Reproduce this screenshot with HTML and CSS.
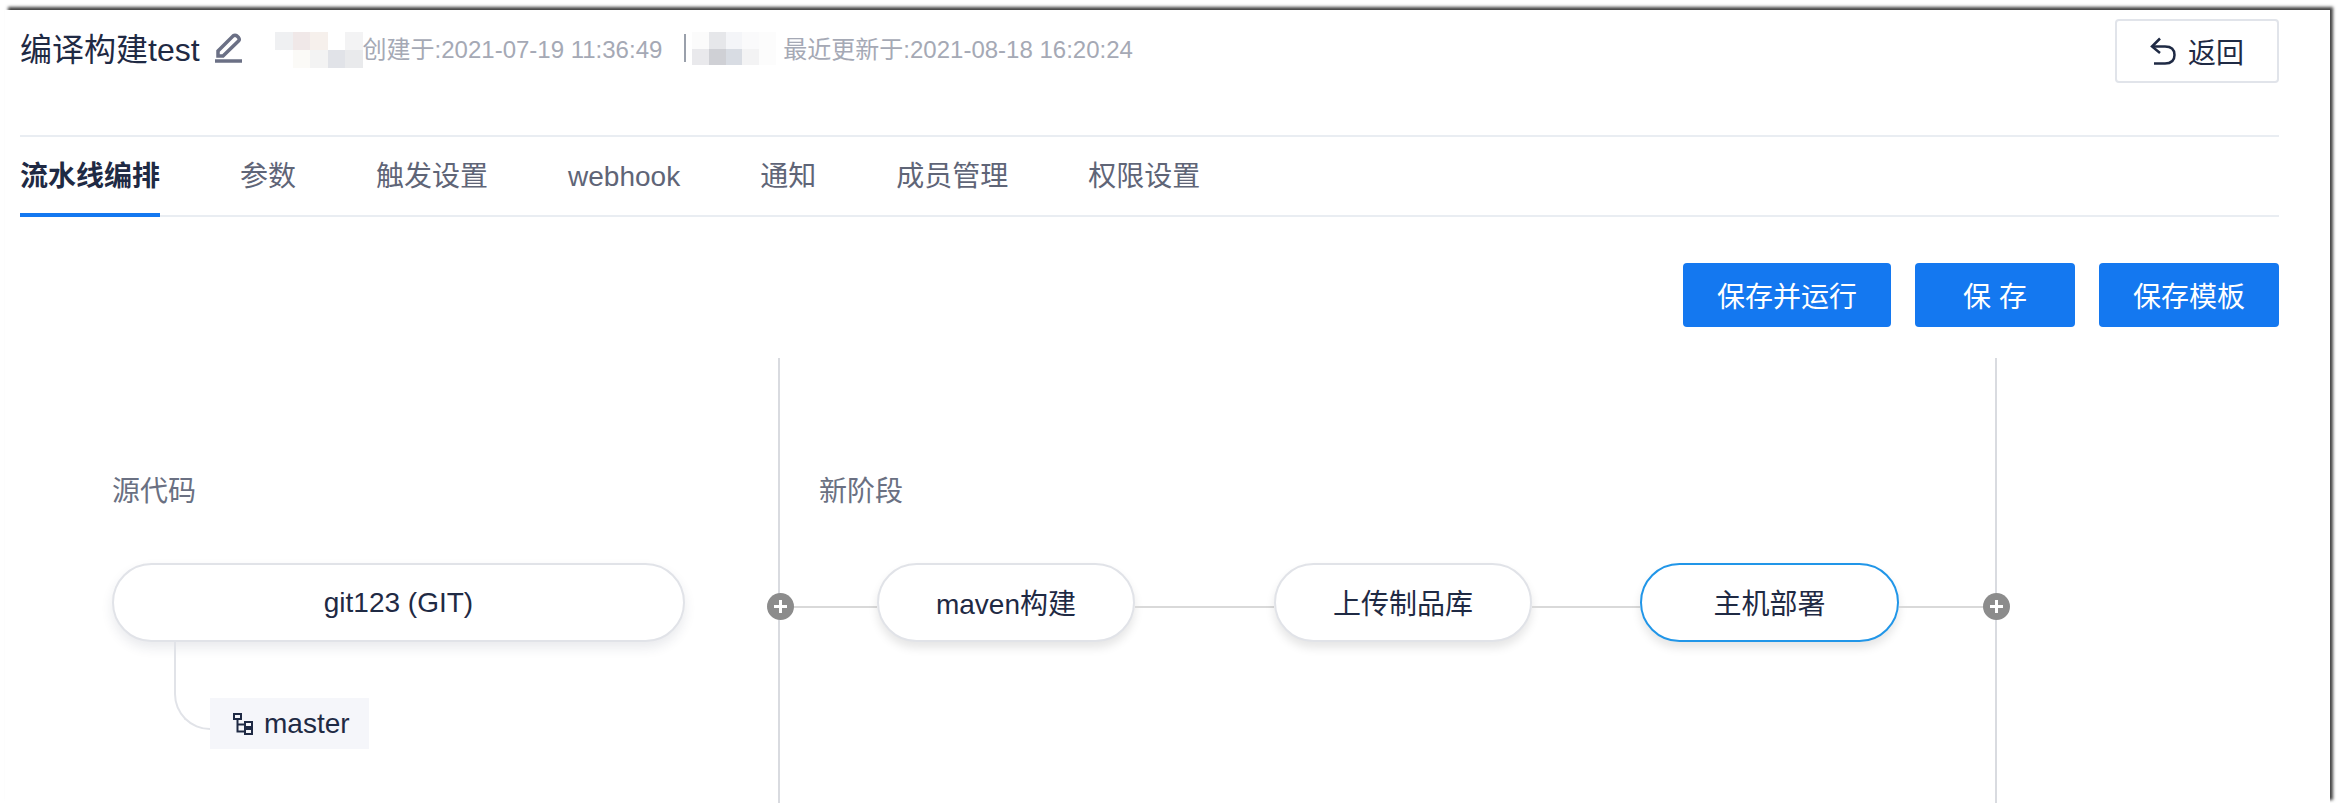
FILE: index.html
```html
<!DOCTYPE html>
<html lang="zh-CN">
<head>
  <meta charset="UTF-8">
  <title>编译构建test</title>
  <link rel="stylesheet" href="styles.css">
</head>
<body>
  <div class="window">
    <header class="topbar">
      <div class="title-row">
        <h1 class="title">编译构建test</h1>
        <svg class="edit-icon" width="28" height="30" viewBox="0 0 28 30" fill="none" stroke="#6b7085" stroke-width="3.500">
          <path d="M3 22 L3 18 L18 3 Q20 1.500 22 3 L23.500 4.500 Q25 6.500 23.500 8 L8 23 L3 23 Z"/>
          <path d="M0 28 H27"/>
        </svg>
        <svg class="mosaic mosaic-first" width="88" height="36" viewBox="0 0 5 2" shape-rendering="crispEdges">
          <rect x="0" y="0" width="1" height="1" fill="#eff0f2"/>
          <rect x="1" y="0" width="1" height="1" fill="#f0e8e8"/>
          <rect x="2" y="0" width="1" height="1" fill="#f6f0ec"/>
          <rect x="4" y="0" width="1" height="1" fill="#f3f3f4"/>
          <rect x="1" y="1" width="1" height="1" fill="#fbfaf7"/>
          <rect x="2" y="1" width="1" height="1" fill="#f3f3f3"/>
          <rect x="3" y="1" width="1" height="1" fill="#e1e3e8"/>
          <rect x="4" y="1" width="1" height="1" fill="#e9eaec"/>
        </svg>
        <span class="meta">创建于:2021-07-19 11:36:49</span>
        <span class="meta-sep"></span>
        <svg class="mosaic mosaic-second" width="84" height="35" viewBox="0 0 5 2" shape-rendering="crispEdges">
          <rect x="0" y="0" width="1" height="1" fill="#fbfbfb"/>
          <rect x="1" y="0" width="1" height="1" fill="#e6e7ea"/>
          <rect x="2" y="0" width="1" height="1" fill="#f4f5f8"/>
          <rect x="3" y="0" width="1" height="1" fill="#fafafb"/>
          <rect x="4" y="0" width="1" height="1" fill="#fcfcfc"/>
          <rect x="0" y="1" width="1" height="1" fill="#e9e9ec"/>
          <rect x="1" y="1" width="1" height="1" fill="#cfd0d5"/>
          <rect x="2" y="1" width="1" height="1" fill="#d8dce3"/>
          <rect x="3" y="1" width="1" height="1" fill="#f3f3f4"/>
          <rect x="4" y="1" width="1" height="1" fill="#fcfcfc"/>
        </svg>
        <span class="meta meta-update">最近更新于:2021-08-18 16:20:24</span>
      </div>
      <button class="btn-back">
        <svg width="26" height="28" viewBox="0 0 26 28" fill="none" stroke="#1f2a44" stroke-width="2.500">
          <path d="M10 1.500 L2 9.500 L10 16"/>
          <path d="M2 9.500 H15 Q24.500 9.500 24.500 18 Q24.500 26.500 15 26.500 H4"/>
        </svg>
        返回
      </button>
    </header>

    <nav class="tabs">
      <a class="tab active">流水线编排</a>
      <a class="tab">参数</a>
      <a class="tab">触发设置</a>
      <a class="tab">webhook</a>
      <a class="tab">通知</a>
      <a class="tab">成员管理</a>
      <a class="tab">权限设置</a>
    </nav>

    <div class="actions">
      <button class="btn-primary btn-run">保存并运行</button>
      <button class="btn-primary btn-save">保 存</button>
      <button class="btn-primary btn-tpl">保存模板</button>
    </div>

    <section class="pipeline">
      <div class="stage stage-source">
        <div class="stage-name">源代码</div>
        <div class="pill pill-source">git123 (GIT)</div>
        <div class="branch-row">
          <span class="branch-curve"></span>
          <span class="branch">
            <svg width="20" height="22" viewBox="0 0 20 22" fill="none" stroke="#1f2a44" stroke-width="2">
              <rect x="1" y="1" width="7" height="5"/>
              <rect x="12" y="9" width="7" height="5"/>
              <rect x="12" y="16" width="7" height="5"/>
              <path d="M4.500 6 V18.500 H12 M4.500 11.500 H12"/>
            </svg>
            master
          </span>
        </div>
      </div>

      <div class="stage stage-jobs">
        <span class="add-btn add-left"></span>
        <div class="stage-name">新阶段</div>
        <div class="job-row">
          <span class="link link-first"></span>
          <div class="pill pill-job">maven构建</div>
          <span class="link"></span>
          <div class="pill pill-job">上传制品库</div>
          <span class="link link-short"></span>
          <div class="pill pill-job selected">主机部署</div>
          <span class="link link-last"></span>
        </div>
        <span class="add-btn add-right"></span>
      </div>
    </section>
  </div>
</body>
</html>
```

FILE: styles.css
```css
html, body {
  height: 100%;
  margin: 0;
  overflow: hidden;
  background: #fff;
}
body {
  font-family: "Liberation Sans", "Noto Sans CJK SC", sans-serif;
  color: #1f2a44;
}
.window {
  box-sizing: border-box;
  height: 793px;
  margin: 10px 10px 0 5px;
  padding: 9px 51px 0 15px;
  background: #fff;
  box-shadow: 3px -3px 3px #444;
}

.topbar {
  display: flex;
  justify-content: space-between;
  align-items: flex-start;
  height: 116px;
  border-bottom: 2px solid #e9edf2;
}
.title-row {
  display: flex;
  align-items: center;
  height: 58px;
}
.title {
  margin: 0;
  padding-top: 4px;
  font-size: 32px;
  font-weight: 400;
  line-height: 54px;
}
.edit-icon {
  margin: 0 0 0 15px;
}
.mosaic-first {
  margin: 4px 0 0 32px;
}
.mosaic-second {
  margin: 0 0 0 6px;
}
.meta {
  font-size: 24px;
  color: #a5a9b5;
  white-space: nowrap;
  margin-top: -2px;
}
.meta-update {
  margin-left: 7px;
}
.meta-sep {
  width: 2px;
  height: 28px;
  margin-left: 22px;
  background: #9aa0ab;
}
.btn-back {
  display: flex;
  align-items: center;
  justify-content: center;
  gap: 12px;
  width: 164px;
  height: 64px;
  padding: 0;
  background: #fff;
  border: 2px solid #e1e4ea;
  border-radius: 4px;
  font: inherit;
  font-size: 28px;
  color: #1f2a44;
}

.tabs {
  display: flex;
  gap: 80px;
  height: 78px;
  border-bottom: 2px solid #e9edf2;
}
.tab {
  height: 78px;
  line-height: 80px;
  font-size: 28px;
  color: #5f6577;
}
.tab.active {
  box-sizing: border-box;
  height: 80px;
  border-bottom: 4px solid #1478f0;
  font-weight: 700;
  color: #1f2a44;
}

.actions {
  display: flex;
  justify-content: flex-end;
  gap: 24px;
  margin-top: 46px;
}
.btn-primary {
  height: 64px;
  padding: 0;
  background: #1478f0;
  border: none;
  border-radius: 4px;
  font: inherit;
  font-size: 28px;
  color: #fff;
}
.btn-run { width: 208px; }
.btn-save { width: 160px; }
.btn-tpl { width: 180px; }

.pipeline {
  display: flex;
  height: 445px;
  margin-top: 31px;
}
.stage-source {
  box-sizing: border-box;
  width: 760px;
  padding: 114px 0 0 92px;
  border-right: 2px solid #d9dbe0;
}
.stage-jobs {
  position: relative;
  box-sizing: border-box;
  width: 1217px;
  padding: 114px 0 0 39px;
  border-right: 2px solid #d9dbe0;
}
.stage-name {
  height: 40px;
  line-height: 40px;
  font-size: 28px;
  color: #6a7082;
}
.pill {
  box-sizing: border-box;
  flex: none;
  height: 79px;
  margin-top: 51px;
  border: 2px solid #e1e3e8;
  border-radius: 40px;
  background: #fff;
  box-shadow: 0 6px 12px rgba(40, 50, 80, 0.1);
  line-height: 75px;
  text-align: center;
  font-size: 28px;
}
.pill-source {
  width: 573px;
}

.branch-row {
  display: flex;
  align-items: flex-end;
}
.branch-curve {
  box-sizing: border-box;
  width: 36px;
  height: 88px;
  margin: 0 0 19px 62px;
  border-left: 2px solid #e1e3e8;
  border-bottom: 2px solid #e1e3e8;
  border-bottom-left-radius: 36px;
}
.branch {
  display: flex;
  align-items: center;
  gap: 11px;
  width: 159px;
  height: 51px;
  margin-top: 56px;
  padding-left: 23px;
  box-sizing: border-box;
  background: #f5f6fa;
  font-size: 28px;
}

.job-row {
  display: flex;
  align-items: center;
  margin-top: 51px;
}
.job-row .pill {
  margin-top: 0;
}
.pill-job {
  width: 258px;
  line-height: 80px;
  box-shadow: 0 6px 10px rgba(0, 0, 0, 0.1);
}
.pill-job.selected {
  width: 259px;
  border-color: #2196e8;
}
.link {
  flex: none;
  width: 139px;
  height: 2px;
  background: #d9d9d9;
}
.link-short {
  width: 108px;
}
.link-first {
  width: 97px;
  margin-left: -39px;
}
.link-last {
  width: 97px;
}
.job-row .link {
  margin-top: 8px;
}
.add-btn {
  position: absolute;
  top: 235px;
  width: 27px;
  height: 27px;
  border-radius: 50%;
  background: #8c8c8c;
}
.add-btn::before,
.add-btn::after {
  content: "";
  position: absolute;
  background: #fff;
}
.add-btn::before {
  left: 7px;
  top: 12px;
  width: 13px;
  height: 3px;
}
.add-btn::after {
  left: 12px;
  top: 7px;
  width: 3px;
  height: 13px;
}
.add-left {
  left: -13px;
}
.add-right {
  right: -15px;
}
```
